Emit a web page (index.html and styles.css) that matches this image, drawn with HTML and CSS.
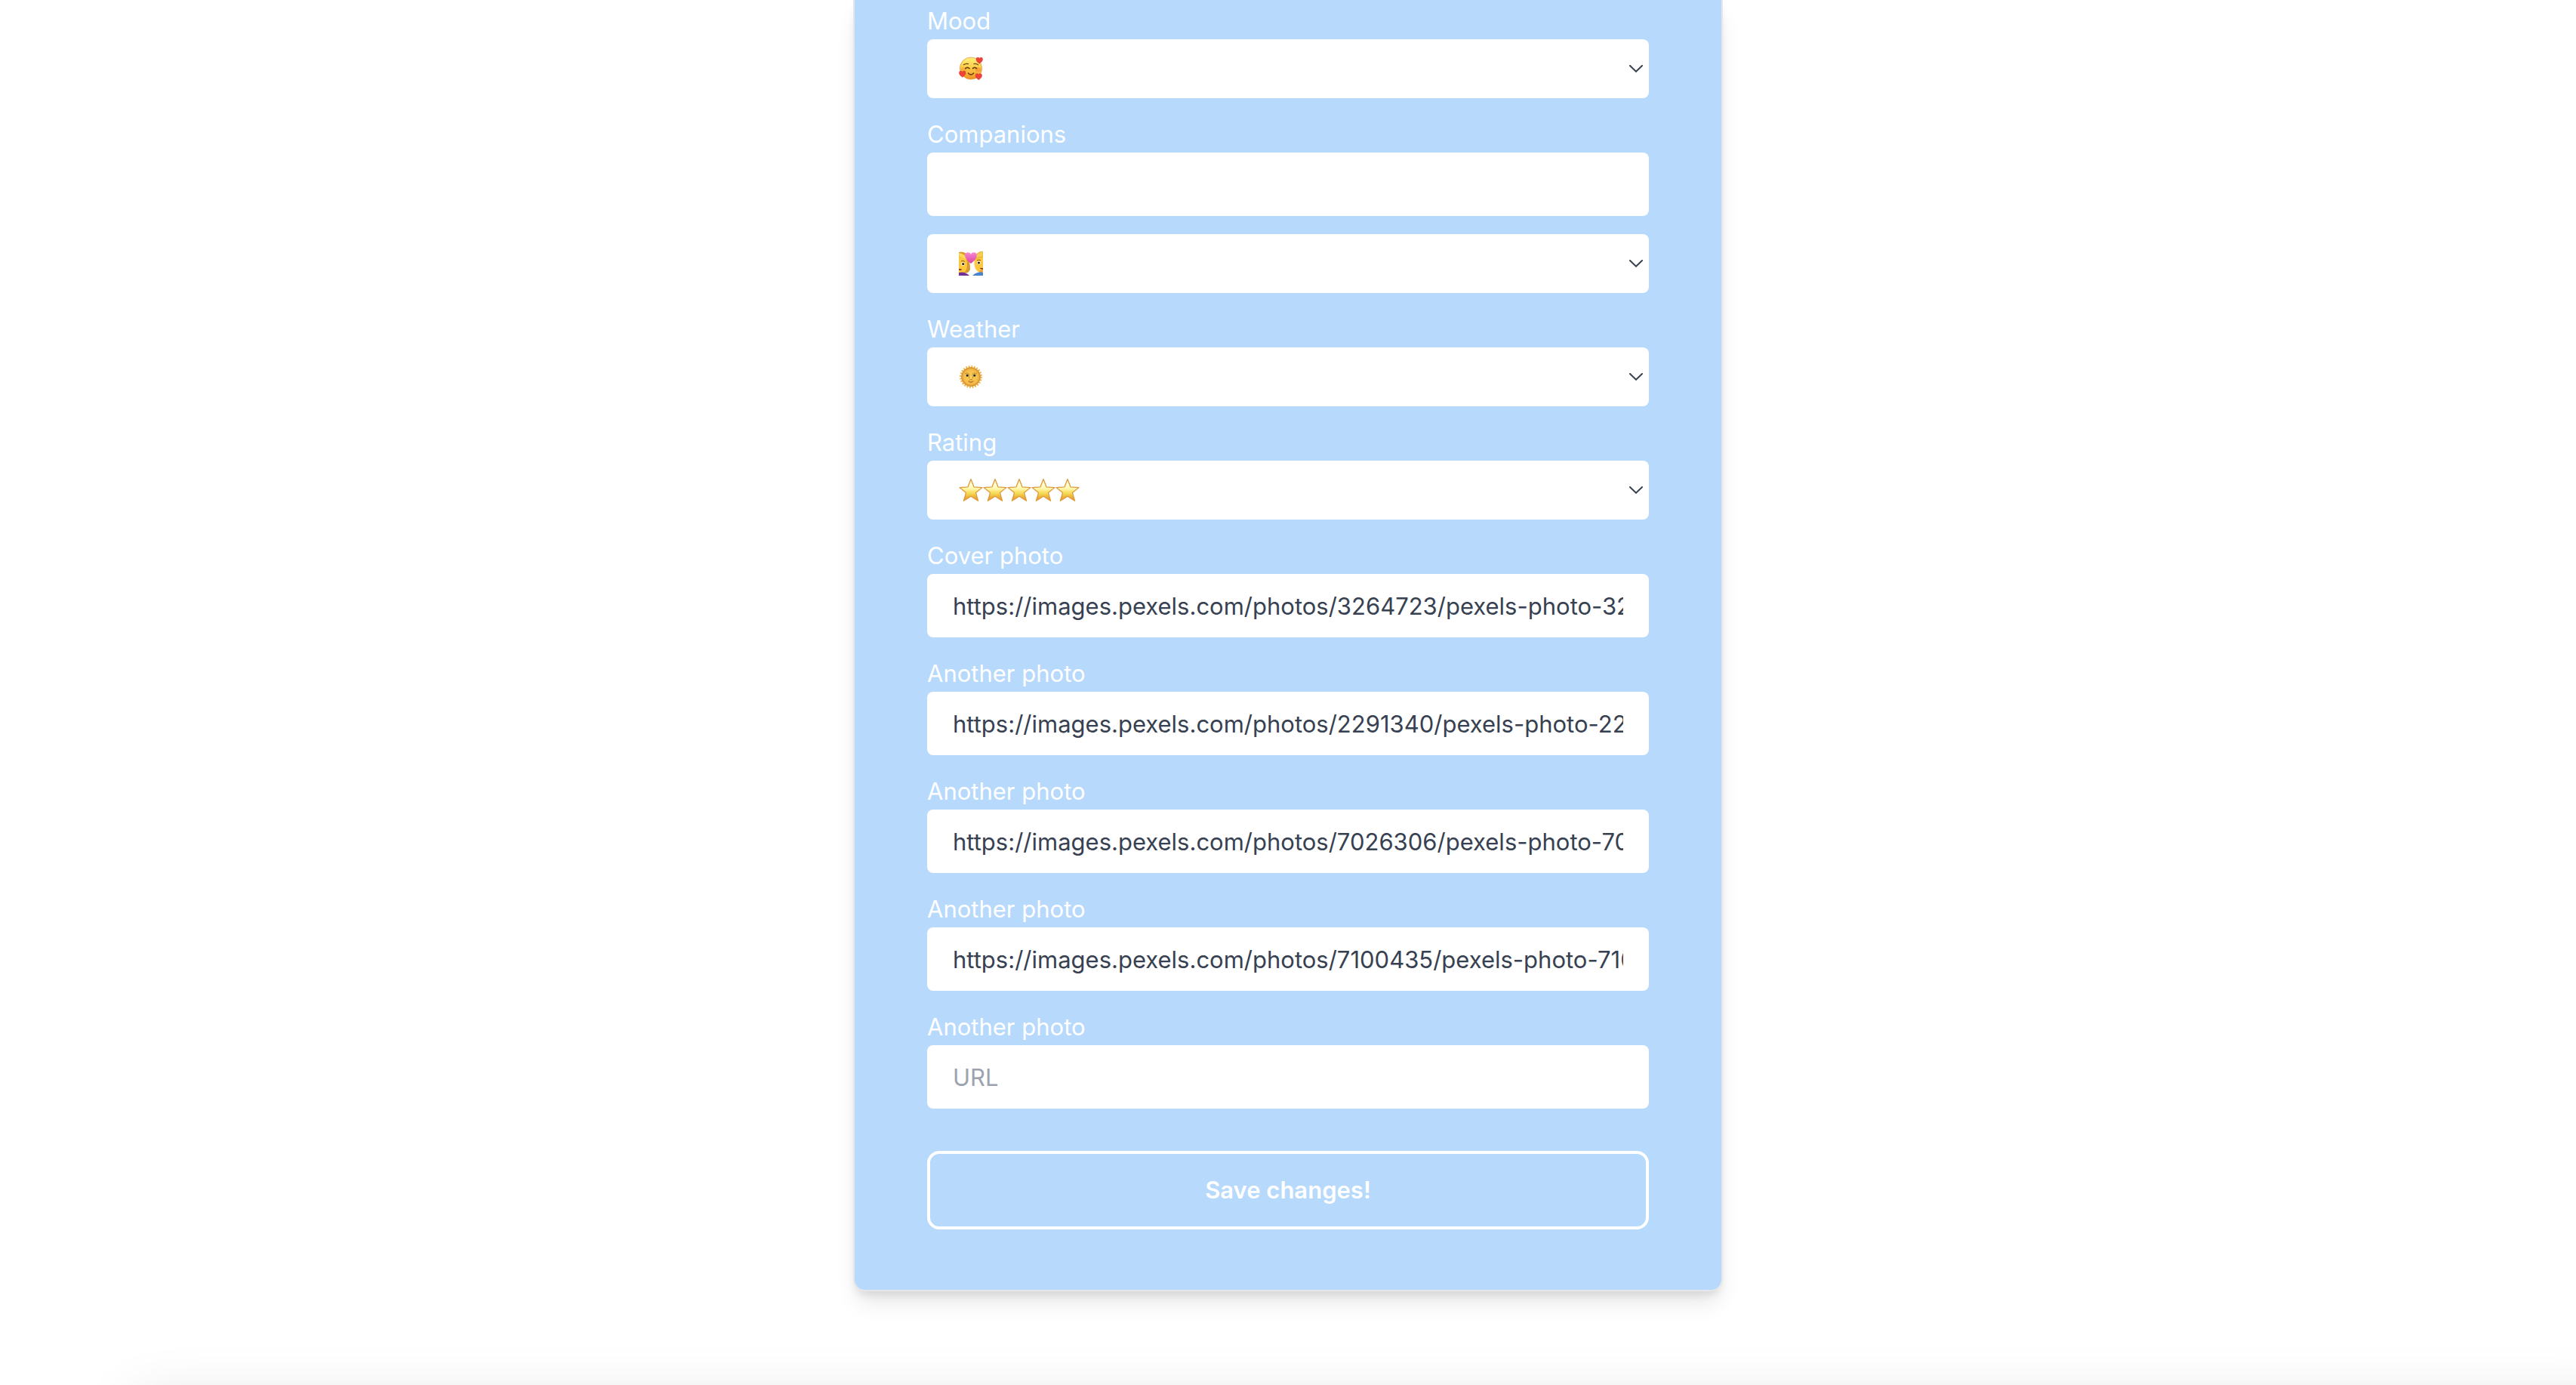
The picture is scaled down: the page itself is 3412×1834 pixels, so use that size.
FILE: index.html
```html
<!DOCTYPE html>
<html lang="en">
<head>
<meta charset="utf-8">
<meta name="viewport" content="width=device-width, initial-scale=1">
<title>Edit memory</title>
<link rel="stylesheet" href="styles.css">
</head>
<body>
<svg class="defs" aria-hidden="true">
  <defs>
    <linearGradient id="skin" x1="0" y1="0" x2="0" y2="1">
      <stop offset="0" stop-color="#fff27a"/><stop offset=".5" stop-color="#fccb45"/><stop offset="1" stop-color="#ee8f25"/>
    </linearGradient>
    <radialGradient id="sun">
      <stop offset="0" stop-color="#fbd45a"/><stop offset=".75" stop-color="#f3bd48"/><stop offset="1" stop-color="#d98c2c"/>
    </radialGradient>
    <linearGradient id="gold" x1="0" y1="0" x2="0" y2="1">
      <stop offset="0" stop-color="#fffdf0"/><stop offset=".4" stop-color="#fffbb8"/><stop offset=".65" stop-color="#f8d955"/><stop offset="1" stop-color="#e08a25"/>
    </linearGradient>
    <linearGradient id="pink" x1="0" y1="0" x2="0" y2="1">
      <stop offset="0" stop-color="#f58bd0"/><stop offset="1" stop-color="#dc3fa6"/>
    </linearGradient>
    <symbol id="heart" viewBox="0 0 10 10">
      <path d="M5 9.6C2.6 7.6.4 5.700.4 3.300A2.400 2.400 0 0 1 5 2.300A2.400 2.400 0 0 1 9.600 3.300C9.600 5.700 7.400 7.600 5 9.600Z"/>
    </symbol>
    <symbol id="star" viewBox="0 0 32 32">
      <path d="M16 1.500 20 11.800 31 12.600 22.400 19.400 25.600 30.300 16 24.200 6.400 30.300 9.600 19.400 1 12.600 12 11.800Z" fill="url(#gold)" stroke="#e09a3c" stroke-width="1.300" stroke-linejoin="round"/>
    </symbol>
  </defs>
</svg>

<main class="page">
  <form class="card">
    <div class="field">
      <label class="label" for="mood">Mood</label>
      <div class="select">
        <select class="control control-select" id="mood"><option>🥰</option></select>
        <span class="emoji">
          <svg class="glyph" viewBox="0 0 32 32" aria-hidden="true">
            <circle cx="16" cy="15.500" r="14.600" fill="url(#skin)" stroke="#d98f35" stroke-width=".7"/>
            <ellipse cx="6.500" cy="17" rx="4" ry="3" fill="#f59a3c" opacity=".5"/><ellipse cx="25.500" cy="17" rx="4" ry="3" fill="#f5803c" opacity=".5"/>
            <g fill="none" stroke="#6b3f10" stroke-linecap="round">
              <path d="M6.500 10.800Q9 8.800 12.500 9.600M20 9.600Q23 8.800 25.500 10.800" stroke-width="1.200"/>
              <path d="M8.800 15.700Q11.300 13 14 15.700M18.500 15.700Q21 13 23.500 15.700M12.500 22Q16 25.500 19.500 22" stroke-width="1.700"/>
            </g>
            <g fill="#ee4438" stroke="#c9302c" stroke-width=".4">
              <use href="#heart" x="22.500" y="0" width="9.500" height="10"/><use href="#heart" x="0" y="18" width="9.500" height="10"/><use href="#heart" x="21.500" y="21.500" width="9.500" height="10"/>
            </g>
          </svg>
        </span>
        <svg class="chevron" viewBox="0 0 18 10" aria-hidden="true"><path d="M1 1 9 8.700 17 1"/></svg>
      </div>
    </div>

    <div class="field">
      <label class="label" for="companions">Companions</label>
      <input class="control control-text" id="companions" type="text">
    </div>

    <div class="field">
      <div class="select">
        <select class="control control-select" aria-label="Companion type"><option>💑</option></select>
        <span class="emoji">
          <svg class="glyph" viewBox="0 0 32 32" aria-hidden="true">
            <path d="M0 1Q9-1 12 7Q15 13 15 24Q12 30 7 28L0 30Z" fill="#d9982f"/>
            <path d="M0 5Q8 5 10.500 12Q12 20 9 26Q5 30 0 28Z" fill="#fdc83e"/>
            <path d="M0 5Q6 9 11 11Q9 3 0 2Z" fill="#f8dc62"/>
            <path d="M0 28Q8 26 14 32H0Z" fill="#713295"/>
            <path d="M32 0Q23 0 21 8Q19.500 17 22 23Q26 29 32 29Z" fill="#fdc83e"/>
            <path d="M32 0Q23 0 20.500 11Q25 7 32 7Z" fill="#f3cf55" stroke="#d9982f" stroke-width=".6"/>
            <path d="M32 27Q23 27 18 32H32Z" fill="#4485cd"/>
            <path d="M26 26 32 28V24Z" fill="#eba133"/>
            <circle cx="5.500" cy="16.500" r="2.300" fill="#fff"/><circle cx="5.700" cy="16.500" r="1.600" fill="#33210f"/>
            <circle cx="26.500" cy="15" r="2.300" fill="#fff"/><circle cx="26.500" cy="15" r="1.600" fill="#33210f"/>
            <path d="M3 13Q6 11.500 8 13.500M24 12Q26 10.500 29 11.500" fill="none" stroke="#8a5417" stroke-width="1"/>
            <path d="M0 23.500Q2 25 3.500 23.500M28.500 22Q30 23.500 32 22.500" fill="none" stroke="#7a3512" stroke-width="1.600"/>
            <use href="#heart" x="7.500" y="-.5" width="17" height="17.500" fill="url(#pink)"/>
          </svg>
        </span>
        <svg class="chevron" viewBox="0 0 18 10" aria-hidden="true"><path d="M1 1 9 8.700 17 1"/></svg>
      </div>
    </div>

    <div class="field">
      <label class="label" for="weather">Weather</label>
      <div class="select">
        <select class="control control-select" id="weather"><option>🌞</option></select>
        <span class="emoji">
          <svg class="glyph" viewBox="0 0 32 32" aria-hidden="true">
            <circle cx="16" cy="16" r="13.400" fill="none" stroke="#efb43d" stroke-width="3.200" stroke-dasharray="1.700 1.808"/>
            <circle cx="16" cy="16" r="12.600" fill="url(#sun)" stroke="#d5943a" stroke-width=".7"/>
            <path d="M8 12Q11 9.500 14 12.500L13.500 18M24 12Q21 9.500 18 12.500L18.500 18" fill="none" stroke="#c98628" stroke-width="1"/>
            <ellipse cx="11.200" cy="14.200" rx="2.300" ry="1.700" fill="#f7e4b0"/><ellipse cx="20.800" cy="14.200" rx="2.300" ry="1.700" fill="#f7e4b0"/>
            <circle cx="11.200" cy="14.200" r="1.600" fill="#33291c"/><circle cx="20.800" cy="14.200" r="1.600" fill="#33291c"/>
            <path d="M14 19Q16 20.500 18 19M12.500 21.500Q16 23 19.500 21.500Q16 26 12.500 21.500" fill="#e59a44" stroke="#bd7427" stroke-width=".8"/>
          </svg>
        </span>
        <svg class="chevron" viewBox="0 0 18 10" aria-hidden="true"><path d="M1 1 9 8.700 17 1"/></svg>
      </div>
    </div>

    <div class="field">
      <label class="label" for="rating">Rating</label>
      <div class="select">
        <select class="control control-select" id="rating"><option>⭐⭐⭐⭐⭐</option></select>
        <span class="emoji">
          <svg class="glyph" aria-hidden="true"><use href="#star"/></svg>
          <svg class="glyph" aria-hidden="true"><use href="#star"/></svg>
          <svg class="glyph" aria-hidden="true"><use href="#star"/></svg>
          <svg class="glyph" aria-hidden="true"><use href="#star"/></svg>
          <svg class="glyph" aria-hidden="true"><use href="#star"/></svg>
        </span>
        <svg class="chevron" viewBox="0 0 18 10" aria-hidden="true"><path d="M1 1 9 8.700 17 1"/></svg>
      </div>
    </div>

    <div class="field">
      <label class="label" for="cover">Cover photo</label>
      <input class="control control-text" id="cover" type="text" placeholder="URL" value="https://images.pexels.com/photos/3264723/pexels-photo-3264723.jpeg">
    </div>
    <div class="field">
      <label class="label" for="photo1">Another photo</label>
      <input class="control control-text" id="photo1" type="text" placeholder="URL" value="https://images.pexels.com/photos/2291340/pexels-photo-2291340.jpeg">
    </div>
    <div class="field">
      <label class="label" for="photo2">Another photo</label>
      <input class="control control-text" id="photo2" type="text" placeholder="URL" value="https://images.pexels.com/photos/7026306/pexels-photo-7026306.jpeg">
    </div>
    <div class="field">
      <label class="label" for="photo3">Another photo</label>
      <input class="control control-text" id="photo3" type="text" placeholder="URL" value="https://images.pexels.com/photos/7100435/pexels-photo-7100435.jpeg">
    </div>
    <div class="field">
      <label class="label" for="photo4">Another photo</label>
      <input class="control control-text" id="photo4" type="text" placeholder="URL">
    </div>

    <button class="save" type="submit">Save changes!</button>
  </form>
</main>
<footer class="footer"></footer>
</body>
</html>
```
FILE: styles.css
```css
*,
*::before,
*::after {
  box-sizing: border-box;
}

body {
  margin: 0;
  min-height: 100vh;
  display: flex;
  flex-direction: column;
  overflow: hidden;
  background: #fff;
  color: #374151;
  font-family: Inter, "Liberation Sans", sans-serif;
  font-size: 31px;
  line-height: 48px;
}

.defs {
  position: absolute;
  width: 0;
  height: 0;
}

.page {
  flex: 1;
  padding: 0 32px;
}

.card {
  display: flex;
  flex-direction: column;
  gap: 24px;
  width: 100%;
  max-width: 1152px;
  margin: 0 auto;
  padding: 4px 96px 80px;
  background: #b6d9fc;
  border: 2px solid #e5e7eb;
  border-top: 0;
  border-radius: 0 0 16px 16px;
  box-shadow: 0 20px 30px -6px rgba(0, 0, 0, 0.1), 0 8px 12px -4px rgba(0, 0, 0, 0.1);
}

.field {
  display: flex;
  flex-direction: column;
}

.label {
  color: #fff;
}

.control {
  width: 100%;
  margin: 0;
  border: 0;
  border-radius: 8px;
  background: #fff;
  color: inherit;
  font: inherit;
}

.control-text {
  height: 84px;
  padding: 0 34px;
}

.control-text::placeholder {
  color: #9ca3af;
  opacity: 1;
}

/* The select, its emoji and its arrow share one grid cell. */
.select {
  display: grid;
  align-items: center;
}

.select > * {
  grid-area: 1 / 1;
}

.control-select {
  appearance: none;
  height: 78px;
  padding: 0 42px;
  color: transparent;
}

.emoji {
  display: flex;
  padding-left: 42px;
  pointer-events: none;
}

.glyph {
  width: 32px;
  height: 32px;
}

.chevron {
  justify-self: end;
  width: 18px;
  height: 10px;
  margin-right: 8px;
  fill: none;
  stroke: #374151;
  stroke-width: 2;
  stroke-linecap: round;
  pointer-events: none;
}

.save {
  height: 104px;
  margin-top: 32px;
  border: 4px solid #fff;
  border-radius: 16px;
  background: transparent;
  color: #fff;
  font: inherit;
  font-weight: 600;
}

.footer {
  margin-left: 240px;
  box-shadow: 0 86px 80px 60px rgba(0, 0, 0, 0.15);
}
```
